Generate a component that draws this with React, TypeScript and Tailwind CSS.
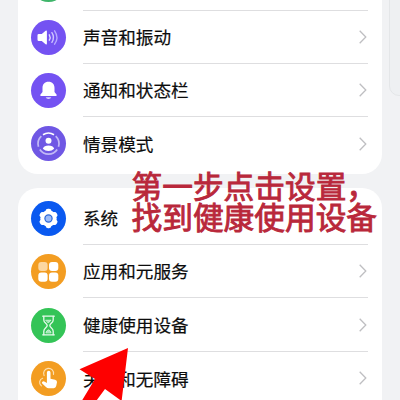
import React from "react";

type RowProps = {
  label: string;
  color: string;
  icon: React.ReactNode;
  arrow?: boolean;
  last?: boolean;
};

const SpeakerIcon = () => (
  <svg viewBox="0 0 35 35" className="w-full h-full" fill="none">
    <path d="M7.800 14h3l3.800-3.200q1.300-.9 1.300.6v12.200q0 1.500-1.300.6L10.800 21h-3q-1.300 0-1.300-1.300v-4.400q0-1.300 1.300-1.300z" fill="#fff" />
    <path d="M18.300 14.800q1.600 2.700 0 5.400" stroke="#e0daff" strokeWidth="1.400" strokeLinecap="round" />
    <path d="M20.900 12.700q3.200 4.800 0 9.600" stroke="#cfc6ff" strokeWidth="1.400" strokeLinecap="round" />
    <path d="M23.600 10.800q4.700 6.700 0 13.400" stroke="#b9abff" strokeWidth="1.400" strokeLinecap="round" />
  </svg>
);

const BellIcon = () => (
  <svg viewBox="0 0 35 35" className="w-full h-full" fill="#fff">
    <path d="M17.500 8.700c-3.800 0-6 2.500-6 6.100v4.300l-2 2.500c-.5.700-.2 1.400.5 1.400h15c.7 0 1-.7.500-1.400l-2-2.500v-4.300c0-3.600-2.200-6.100-6-6.100z" />
    <path d="M14.700 24.200h5.600q-.6 1.800-2.800 1.800t-2.800-1.800z" fill="#ddd7ff" />
  </svg>
);

const ProfileIcon = () => (
  <svg viewBox="0 0 35 35" className="w-full h-full" fill="none">
    <g stroke="#c1b8f6" strokeWidth="1.700">
      <path d="M10.300 10.200a10.500 10.500 0 0 0-2.800 10.500" />
      <path d="M24.700 10.200a10.500 10.500 0 0 1 2.800 10.500" />
      <path d="M8.800 23.600a10.500 10.500 0 0 0 17.400 0" />
    </g>
    <path d="M12 8.700a10.500 10.500 0 0 1 11 0" stroke="#fff" strokeWidth="1.700" />
    <circle cx="17.500" cy="14.800" r="3" fill="#fff" />
    <path d="M11.800 22.800c.7-2.500 3-3.300 5.700-3.300s5 .8 5.700 3.300q-2.300 2.200-5.700 2.200t-5.700-2.200z" fill="#fff" />
  </svg>
);

const GearIcon = () => (
  <svg viewBox="0 0 35 35" className="w-full h-full" fill="#fff">
    <circle cx="17.500" cy="17.500" r="8.200" />
    <rect x="14.600" y="7.800" width="5.800" height="19.400" rx="2.400" />
    <rect x="14.600" y="7.800" width="5.800" height="19.400" rx="2.400" transform="rotate(60 17.500 17.500)" />
    <rect x="14.600" y="7.800" width="5.800" height="19.400" rx="2.400" transform="rotate(120 17.500 17.500)" />
    <circle cx="17.500" cy="17.500" r="3.600" fill="#9dbcf8" stroke="#2a66d8" strokeWidth="1.200" />
  </svg>
);

const AppsIcon = () => (
  <svg viewBox="0 0 35 35" className="w-full h-full" fill="#fff">
    <rect x="7.300" y="7.900" width="9.300" height="9.100" rx="3" fill="#fcd7a1" />
    <rect x="18" y="7.900" width="9.300" height="9.100" rx="3" />
    <rect x="7.300" y="18.600" width="9.300" height="9.100" rx="3" />
    <rect x="18" y="18.600" width="9.300" height="9.100" rx="3" />
  </svg>
);

const HourglassIcon = () => (
  <svg viewBox="0 0 35 35" className="w-full h-full" fill="none" stroke="#e8faed" strokeWidth="1.300" strokeLinecap="round" strokeLinejoin="round">
    <path d="M11.700 8.200h11.600M11.700 26.800h11.600" />
    <path d="M12.800 8.400v3.500c0 3 3.400 3.600 3.400 5.600s-3.400 2.700-3.400 5.700v3.500M22.200 8.400v3.500c0 3-3.400 3.600-3.400 5.600s3.400 2.700 3.400 5.700v3.500" />
    <path d="M15 12.200h5l-2.500 2.600zM15 24.500q.5-2.200 2.500-2.700 2 .5 2.500 2.700z" fill="#a7ecba" strokeWidth=".7" />
  </svg>
);

const TouchIcon = () => (
  <svg viewBox="0 0 35 35" className="w-full h-full" fill="none">
    <path d="M13.100 14.500a5 5 0 1 1 9.400-1.200" stroke="#fde0b2" strokeWidth="1.200" strokeLinecap="round" />
    <path d="M11.600 17.300a4.300 4.300 0 0 0-1.300 7.500" stroke="#fde0b2" strokeWidth="1.200" strokeLinecap="round" />
    <path d="M15.900 11.500q0-1.800 1.800-1.800t1.800 1.800v6.300l4.600.9q2.200.5 1.900 2.600l-.8 3.800q-.4 2.100-2.500 2.100h-5q-1.500 0-2.500-1l-4-3.800q-.8-1.100.2-1.700 1-.7 2.400.1l2.100 1.200z" fill="#fff" />
  </svg>
);

function Chevron() {
  return (
    <svg viewBox="0 0 8 14" className="w-2 h-3.5 shrink-0" fill="none" stroke="#bfbfc2" strokeWidth="1.300">
      <path d="M.7.700 6.800 7 .7 13.300" />
    </svg>
  );
}

function Row({ label, color, icon, arrow = true, last }: RowProps) {
  return (
    <li className="flex h-[53.300px] pl-[12.500px] pr-3.5">
      <div className="flex items-center w-[52.500px] shrink-0">
        <div className={`w-[35px] h-[35px] rounded-full ${color}`}>{icon}</div>
      </div>
      <div className={`flex flex-1 items-center justify-between pr-px ${last ? "" : "border-b border-[#dedee0]"}`}>
        <span className="text-[17.600px] leading-none whitespace-nowrap text-[#0c0c0c] [-webkit-text-stroke:0.200px_#0c0c0c]">
          {label}
        </span>
        {arrow && <Chevron />}
      </div>
    </li>
  );
}

export default function App() {
  return (
    <div className="relative w-[400px] h-[400px] overflow-hidden bg-[#f1f2f4] font-['Noto_Sans_CJK_SC',sans-serif]">
      <div className="flex flex-col gap-3.5 px-[18px]">
        <ul className="h-[174px] bg-white rounded-b-[20px]">
          <li className="flex h-[10.500px] pl-[12.500px] pr-3.5">
            <div className="w-[52.500px] shrink-0">
              <div className="w-[35px] h-[35px] -mt-[33.500px] rounded-full bg-[#3fb56a]" />
            </div>
            <div className="flex-1 border-b border-[#dedee0]" />
          </li>
          <Row label="声音和振动" color="bg-[#7452f2]" icon={<SpeakerIcon />} />
          <Row label="通知和状态栏" color="bg-[#7452f2]" icon={<BellIcon />} />
          <Row label="情景模式" color="bg-[#6f57e4]" icon={<ProfileIcon />} last />
        </ul>
        <ul className="h-[230px] pt-[3.800px] bg-white rounded-t-[20px]">
          <Row label="系统" color="bg-[#0a59f0]" icon={<GearIcon />} arrow={false} />
          <Row label="应用和元服务" color="bg-[#f39d22]" icon={<AppsIcon />} />
          <Row label="健康使用设备" color="bg-[#34c457]" icon={<HourglassIcon />} />
          <Row label="关怀和无障碍" color="bg-[#f39d22]" icon={<TouchIcon />} last />
        </ul>
      </div>

      {/* side panel handle */}
      <div className="absolute left-[389px] -top-5 w-8 h-[116px] rounded-[10px] border border-[#e4e6e8] bg-[#eef0f2]" />

      <div className="absolute left-[131.500px] top-[169px] text-[30.700px] leading-[31px] whitespace-nowrap text-[#b9283b] [-webkit-text-stroke:0.900px_#b9283b]">
        <p>第一步点击设置，</p>
        <p>找到健康使用设备</p>
      </div>

      <svg viewBox="0 0 60 60" className="absolute left-[74px] top-[340px] w-[60px] h-[60px]">
        <path d="M54 8 5.500 29.200 21 39 8 60.500h14.500L31 49l16.600 12z" fill="#fe0000" />
      </svg>
    </div>
  );
}
